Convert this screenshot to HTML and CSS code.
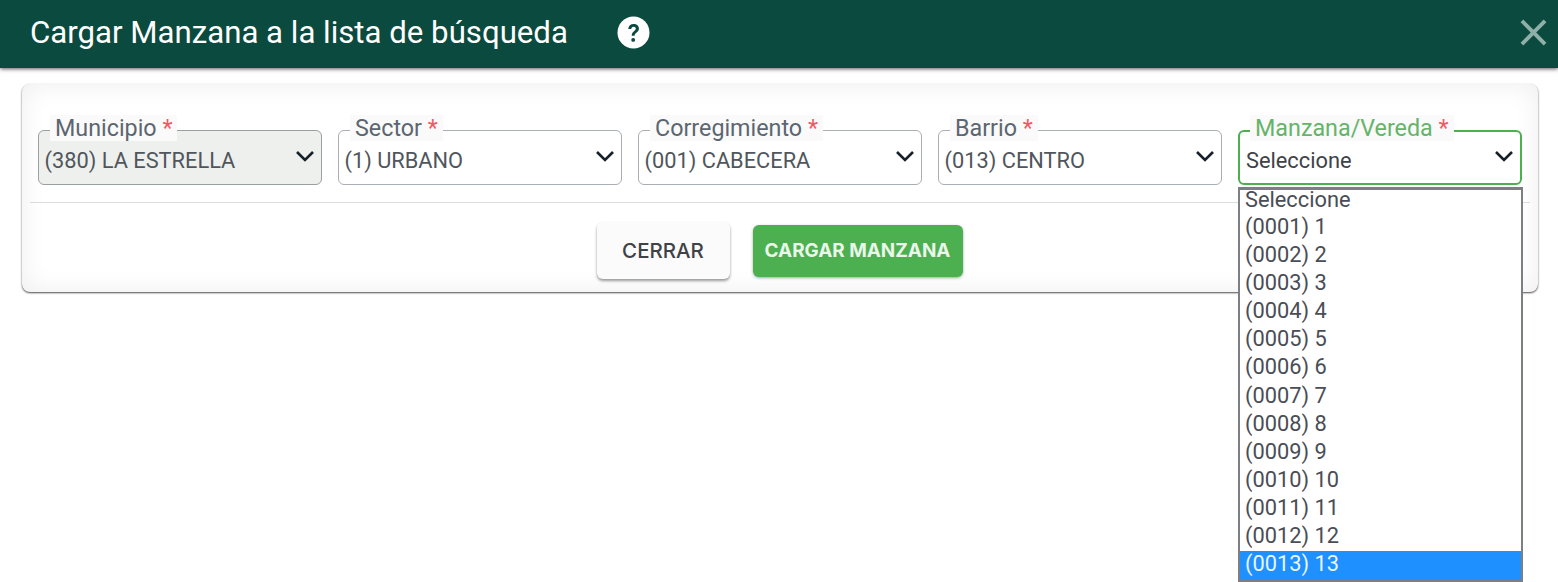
FILE: index.html
```html
<!DOCTYPE html>
<html lang="es">
<head>
<meta charset="utf-8">
<title>Cargar Manzana</title>
<link rel="stylesheet" href="styles.css">
</head>
<body>
<header class="topbar">
  <h1 class="title">Cargar Manzana a la lista de búsqueda</h1>
  <svg class="help" viewBox="0 0 34 34" aria-label="Ayuda"><circle cx="17" cy="17" r="16.5" fill="#fff"/><path d="M11.6 13.4c.2-3.3 2.4-5.2 5.6-5.2 3.200 0 5.400 1.900 5.400 4.700 0 2-1 3.200-2.600 4.300-1.400 1-1.800 1.600-1.800 3.100h-3c-.1-2.300.6-3.500 2.300-4.700 1.300-.9 1.900-1.600 1.900-2.600 0-1.200-.9-2-2.200-2-1.400 0-2.300.9-2.500 2.400z" fill="#0b4a3e"/><circle cx="16.700" cy="24.600" r="2" fill="#0b4a3e"/></svg>
  <svg class="close" viewBox="0 0 28 28" aria-label="Cerrar"><path d="M2 2l24 24M26 2L2 26" stroke="#8fb0a8" stroke-width="4" fill="none"/></svg>
</header>
<main class="page">
  <section class="card">
    <div class="fields">
      <div class="field field-disabled">
        <span class="label">Municipio <em>*</em></span>
        <span class="value">(380) LA ESTRELLA</span>
        <svg class="chev" viewBox="0 0 20 12"><path d="M2 2l8 8 8-8" stroke="#16202a" stroke-width="2.600" fill="none"/></svg>
      </div>
      <div class="field">
        <span class="label">Sector <em>*</em></span>
        <span class="value">(1) URBANO</span>
        <svg class="chev" viewBox="0 0 20 12"><path d="M2 2l8 8 8-8" stroke="#16202a" stroke-width="2.600" fill="none"/></svg>
      </div>
      <div class="field">
        <span class="label">Corregimiento <em>*</em></span>
        <span class="value">(001) CABECERA</span>
        <svg class="chev" viewBox="0 0 20 12"><path d="M2 2l8 8 8-8" stroke="#16202a" stroke-width="2.600" fill="none"/></svg>
      </div>
      <div class="field">
        <span class="label">Barrio <em>*</em></span>
        <span class="value">(013) CENTRO</span>
        <svg class="chev" viewBox="0 0 20 12"><path d="M2 2l8 8 8-8" stroke="#16202a" stroke-width="2.600" fill="none"/></svg>
      </div>
      <div class="field field-active">
        <span class="label">Manzana/Vereda <em>*</em></span>
        <span class="value">Seleccione</span>
        <svg class="chev" viewBox="0 0 20 12"><path d="M2 2l8 8 8-8" stroke="#16202a" stroke-width="2.600" fill="none"/></svg>
        <ul class="dropdown">
          <li>Seleccione</li>
          <li>(0001) 1</li>
          <li>(0002) 2</li>
          <li>(0003) 3</li>
          <li>(0004) 4</li>
          <li>(0005) 5</li>
          <li>(0006) 6</li>
          <li>(0007) 7</li>
          <li>(0008) 8</li>
          <li>(0009) 9</li>
          <li>(0010) 10</li>
          <li>(0011) 11</li>
          <li>(0012) 12</li>
          <li class="selected">(0013) 13</li>
        </ul>
      </div>
    </div>
    <div class="actions">
      <button class="btn btn-light">CERRAR</button>
      <button class="btn btn-green">CARGAR MANZANA</button>
    </div>
  </section>
</main>
</body>
</html>
```
FILE: styles.css
```css
* { box-sizing: border-box; }
html, body { margin: 0; height: 582px; overflow: hidden; background: #fff; }
body { font-family: Roboto, "Liberation Sans", sans-serif; color: #4a4f55; }

.topbar {
  height: 68px;
  background: #0b4a3e;
  display: flex;
  align-items: center;
  padding: 0 11px 4px 30px;
  box-shadow: 0 1px 4px rgba(0,0,0,.65);
  position: relative;
}
.title { margin: 0; font-size: 31.200px; font-weight: 400; color: #fff; }
.help { width: 33px; height: 33px; margin-left: 49px; }
.close { width: 27px; height: 27px; margin-left: auto; margin-top: 1px; }

.page { padding: 16px 20px 0 22px; }
.card {
  height: 208px;
  border-radius: 8px;
  background: #fff;
  box-shadow: 0 1px 2px rgba(0,0,0,.7), inset 0 0 26px rgba(0,0,0,.07);
  padding: 46px 16px 0;
}
.fields {
  display: grid;
  grid-template-columns: repeat(5, 284px);
  gap: 16px;
  padding-bottom: 18px;
  position: relative;
}
.fields::after {
  content: "";
  position: absolute;
  left: -8px;
  right: -8px;
  bottom: 0;
  height: 1px;
  background: #dcdcdc;
}
.field {
  position: relative;
  height: 55px;
  border: 1px solid #a9aeb3;
  border-radius: 6px;
  background: #fff;
  padding: 17px 0 0 5.500px;
}
.field-disabled { background: #eef0ee; border-color: #9aa09f; }
.field-active { border: 2px solid #4caf50; padding: 16px 0 0 6px; background: #fff; }

.label {
  position: absolute;
  left: 11px;
  top: -16px;
  padding: 0 5px;
  font-size: 23.300px;
  line-height: 26px;
  color: #5c6670;
  background: #fafafa;
}
.field-active .label { left: 10px; top: -17px; color: #66b36a; }
.label em { font-style: normal; color: #ef5a62; }
.value { font-size: 21.800px; line-height: 26px; color: #50565c; display: block; }
.field-active .value { color: #3f4247; }
.chev { position: absolute; right: 6.500px; top: 19px; width: 20px; height: 12px; }
.field-active .chev { right: 6px; top: 18px; }

.dropdown {
  position: absolute;
  z-index: 2;
  left: -2px;
  top: 55px;
  width: 285px;
  margin: 0;
  padding: 0;
  list-style: none;
  background: #fff;
  border: 2px solid #7c7f83;
  border-top-width: 3px;
  height: 395px;
}
.dropdown li { height: 28.100px; line-height: 26px; padding-left: 5px; font-size: 21.800px; color: #4a4d55; }
.dropdown li:first-child { height: 24px; line-height: 20px; }
.dropdown .selected { height: 29px; background: #1e90ff; color: #e9f4ff; line-height: 26px; }

.actions { display: flex; justify-content: center; align-items: center; gap: 23px; padding: 19px 0 0; margin-right: 1px; }
.btn {
  border: 0;
  border-radius: 6px;
  font-family: Inter, Roboto, sans-serif;
}
.btn-light { width: 133px; height: 57px; background: #fbfbfb; color: #3f4246; font-weight: 500; font-size: 20.500px; box-shadow: 0 2px 3px rgba(0,0,0,.4); }
.btn-green { width: 210px; height: 52px; background: #4caf50; color: #eaf6ea; font-weight: 700; font-size: 18.900px; box-shadow: 0 1px 3px rgba(0,0,0,.35); }
```
